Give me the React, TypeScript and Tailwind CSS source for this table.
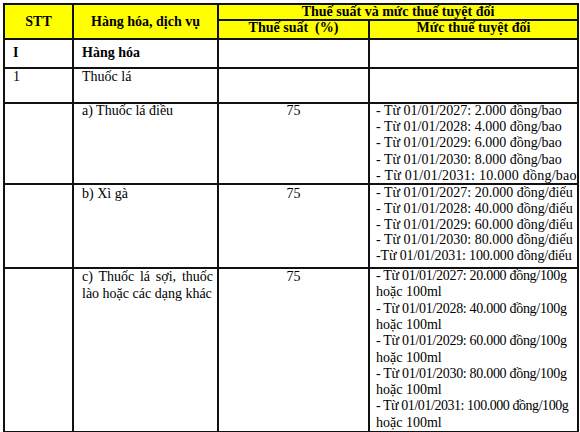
import React from 'react';

type Line = {
  text: string,
  tight?: string,
}

type Rate = {
  label: string[],
  percent: string,
  lines: Line[],
  rowClass: string,
  textClass: string,
  labelClass: string,
}

const rates: Rate[] = [
  {
    label: ['a) Thuốc lá điều'],
    percent: '75',
    lines: [
      { text: '- Từ 01/01/2027: 2.000 đồng/bao' },
      { text: '- Từ 01/01/2028: 4.000 đồng/bao' },
      { text: '- Từ 01/01/2029: 6.000 đồng/bao' },
      { text: '- Từ 01/01/2030: 8.000 đồng/bao' },
      { text: '- Từ 01/01/2031: 10.000 đồng/bao', tight: 'tracking-[0.25px]' },
    ],
    rowClass: 'h-[81px]',
    textClass: 'leading-[16.2px] -mt-px -mb-px',
    labelClass: 'leading-[16.2px] -mt-px',
  },
  {
    label: ['b) Xì gà'],
    percent: '75',
    lines: [
      { text: '- Từ 01/01/2027: 20.000 đồng/điếu' },
      { text: '- Từ 01/01/2028: 40.000 đồng/điếu' },
      { text: '- Từ 01/01/2029: 60.000 đồng/điếu' },
      { text: '- Từ 01/01/2030: 80.000 đồng/điếu' },
      { text: '-Từ 01/01/2031: 100.000 đồng/điếu', tight: 'tracking-[-0.15px]' },
    ],
    rowClass: 'h-[84px]',
    textClass: 'leading-[15.8px]',
    labelClass: 'leading-[16px] mt-px',
  },
  {
    label: ['c) Thuốc lá sợi, thuốc', 'lào hoặc các dạng khác'],
    percent: '75',
    lines: [
      { text: '- Từ 01/01/2027: 20.000 đồng/100g', tight: 'tracking-[-0.3px]' },
      { text: 'hoặc 100ml' },
      { text: '- Từ 01/01/2028: 40.000 đồng/100g', tight: 'tracking-[-0.3px]' },
      { text: 'hoặc 100ml' },
      { text: '- Từ 01/01/2029: 60.000 đồng/100g', tight: 'tracking-[-0.3px]' },
      { text: 'hoặc 100ml' },
      { text: '- Từ 01/01/2030: 80.000 đồng/100g', tight: 'tracking-[-0.3px]' },
      { text: 'hoặc 100ml' },
      { text: '- Từ 01/01/2031: 100.000 đồng/100g', tight: 'tracking-[-0.45px]' },
      { text: 'hoặc 100ml' },
    ],
    rowClass: 'h-[164px]',
    textClass: 'leading-[16.3px] -mt-px',
    labelClass: 'leading-[17px] -mt-px',
  },
];

const cell = 'border-2 border-[#111] p-0 align-top';

const App = () => (
  <div className="w-[580px] h-[432px] bg-white pl-[3px] pt-[3px] font-['Liberation_Serif','Times_New_Roman',serif] text-[14px] text-black">
    <table className="table-fixed border-collapse w-[574px]">
      <colgroup>
        <col className="w-[69px]" />
        <col className="w-[145px]" />
        <col className="w-[151px]" />
        <col className="w-[209px]" />
      </colgroup>
      <tbody>
        {/* Header */}
        <tr className="h-[15px] bg-[#ffff00] font-bold leading-[14px]">
          <td rowSpan={2} className="border-2 border-[#111] p-0 text-center align-middle leading-[16px]">STT</td>
          <td rowSpan={2} className="border-2 border-[#111] p-0 text-center align-middle leading-[16px]">Hàng hóa, dịch vụ</td>
          <td colSpan={2} className={`${cell} text-center`}>Thuế suất và mức thuế tuyệt đối</td>
        </tr>
        <tr className="h-[19px] bg-[#ffff00] font-bold leading-[14px]">
          <td className={`${cell} text-center whitespace-pre`}>Thuế suất  (%)</td>
          <td className={`${cell} text-center`}>Mức thuế tuyệt đối</td>
        </tr>

        <tr className="h-[29px] font-bold leading-[16px]">
          <td className={`${cell} pl-[8px] pt-[5px]`}>I</td>
          <td className={`${cell} pl-[8px] pt-[5px]`}>Hàng hóa</td>
          <td className={cell} />
          <td className={cell} />
        </tr>

        <tr className="h-[35px] leading-[16px]">
          <td className={`${cell} pl-[8px]`}>1</td>
          <td className={`${cell} pl-[8px]`}>Thuốc lá</td>
          <td className={cell} />
          <td className={cell} />
        </tr>

        {rates.map((rate) => (
          <tr key={rate.label[0]} className={rate.rowClass}>
            <td className={cell} />
            <td className={`${cell} pl-[8px] pr-[4px]`}>
              <div className={rate.labelClass}>
                {rate.label.map((line, i) => (
                  <div
                    key={line}
                    className={i < rate.label.length - 1 ? 'text-justify [text-align-last:justify]' : ''}
                  >
                    {line}
                  </div>
                ))}
              </div>
            </td>
            <td className={`${cell} text-center`}>
              <div className={rate.labelClass}>{rate.percent}</div>
            </td>
            <td className={`${cell} pl-[6px]`}>
              <div className={rate.textClass}>
                {rate.lines.map((line, i) => (
                  <div key={`${line.text}-${i}`} className={`whitespace-nowrap ${line.tight ?? ''}`}>
                    {line.text}
                  </div>
                ))}
              </div>
            </td>
          </tr>
        ))}
      </tbody>
    </table>
  </div>
);

export default App;
